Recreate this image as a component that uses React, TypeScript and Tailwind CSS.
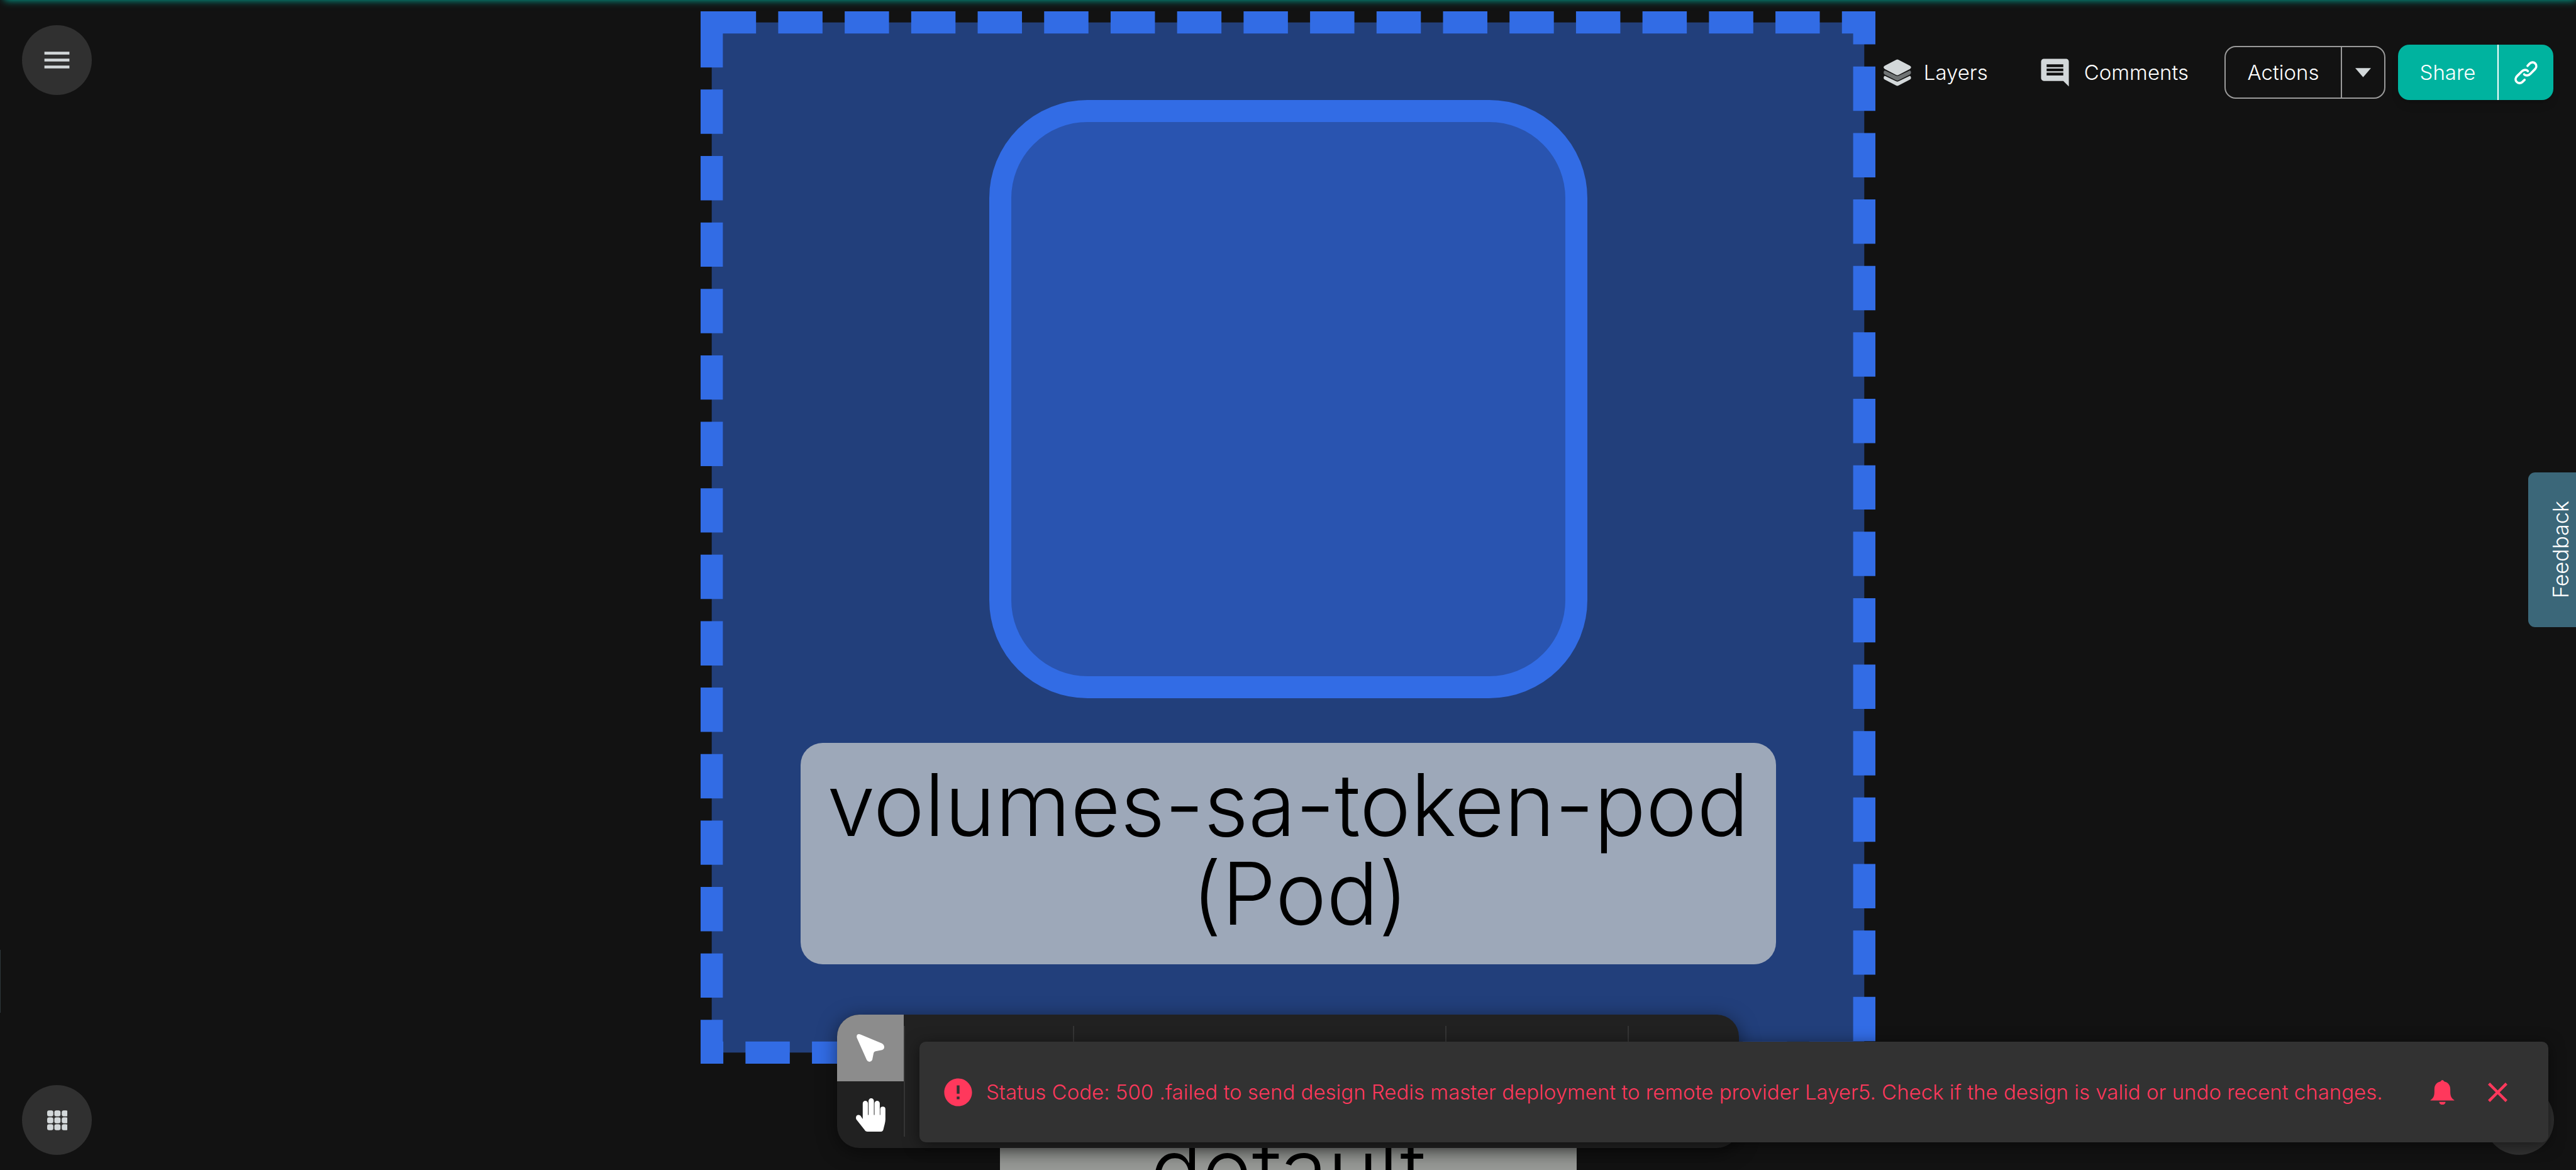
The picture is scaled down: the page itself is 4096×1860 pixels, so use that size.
import React from "react";

const FONT = "font-['Inter','Open_Sans',sans-serif] font-light";

function MenuIcon() {
  return (
    <svg viewBox="0 0 24 24" className="size-[53px] fill-[#d3d8da]" aria-hidden="true">
      <path d="M3 18h18v-2H3v2zm0-5h18v-2H3v2zm0-7v2h18V6H3z" />
    </svg>
  );
}

function AppsIcon() {
  const cells = [0, 47, 95];
  const rows = [0, 45, 90];
  return (
    <svg viewBox="-4 -5 135 135" className="size-[33px] fill-[#d3d8da]" aria-hidden="true">
      {rows.map((y) =>
        cells.map((x) => <rect key={`${x}-${y}`} x={x} y={y} width="40" height="39" rx="13" />)
      )}
    </svg>
  );
}

function LayersIcon() {
  return (
    <svg viewBox="39 50 177 174" className="h-[43px] w-[44px] fill-[#d3d8da]" aria-hidden="true">
      <path d="M120 54Q127 50 134 54L208 92Q223 103 208 114L134 152Q127 156 120 152L46 114Q31 103 46 92Z" />
      <path
        fill="#6f7374"
        d="M46 123L120 157Q127 161 134 157L208 123Q216 128 215 138Q215 145 208 149L134 187Q127 191 120 187L46 149Q39 145 39 138Q38 128 46 123Z"
      />
      <path d="M46 157L120 193Q127 197 134 193L208 157Q216 162 215 171Q215 178 208 182L134 220Q127 224 120 220L46 182Q39 178 39 171Q38 162 46 157Z" />
    </svg>
  );
}

function CommentIcon() {
  return (
    <svg viewBox="0 0 24 24" className="size-[53px] fill-[#d3d8da]" aria-hidden="true">
      <path d="M21.99 4c0-1.1-.89-2-1.99-2H4c-1.1 0-2 .9-2 2v12c0 1.1.9 2 2 2h14l4 4-.01-18zM18 14H6v-2h12v2zm0-3H6V9h12v2zm0-3H6V6h12v2z" />
    </svg>
  );
}

function CaretIcon() {
  return (
    <svg viewBox="0 0 24 14" className="h-[15px] w-[25px] fill-[#d3d8da]" aria-hidden="true">
      <path d="M0 0h24L12 14z" />
    </svg>
  );
}

function LinkIcon() {
  return (
    <svg
      viewBox="64 117 160 160"
      className="size-[39px] fill-none stroke-white"
      strokeWidth="15"
      strokeLinecap="round"
      aria-hidden="true"
    >
      <path d="M154 153L166 140C177 128 193 126 203 136C214 147 213 163 204 173L172 205C161 217 143 219 132 208" />
      <path d="M156 187C146 176 129 177 118 188L85 220C74 231 73 246 83 257C93 268 109 268 119 259L135 244" />
    </svg>
  );
}

function CursorIcon() {
  return (
    <svg viewBox="0 0 60 60" className="size-[44px] fill-white" aria-hidden="true">
      <path d="M.6 8Q-1 0 5 0Q7 0 10 1.500L55 20Q60 23 60 28Q60 33 55 34.500L41 37Q37.600 38 37 41L34 56Q32 60 28 60Q24 60 22 56Z" />
    </svg>
  );
}

function HandIcon() {
  return (
    <svg viewBox="0 0 64 72" className="h-[53px] w-[47px] fill-white" aria-hidden="true">
      <path d="M14.700 45V11a5.600 5.600 0 0 1 11.300 0V36h1.300V5.700a5.800 5.800 0 0 1 11.600 0V36h1.300V11a5.700 5.700 0 0 1 11.400 0V36h1V23.500a5.600 5.600 0 0 1 11.200 0V46C63.800 52 61 60 59.500 67Q58.500 72 54 72H25Q20.500 72 18.500 68L1 46C-1 42 0 37 4.500 36C8 35.500 10 37 11.500 40Z" />
    </svg>
  );
}

function ErrorIcon() {
  return (
    <svg viewBox="0 0 24 24" className="size-[53px] shrink-0 fill-[#ff385c]" aria-hidden="true">
      <path d="M12 2C6.480 2 2 6.480 2 12s4.480 10 10 10 10-4.480 10-10S17.520 2 12 2zm1 15h-2v-2h2v2zm0-4h-2V7h2v6z" />
    </svg>
  );
}

function BellIcon() {
  return (
    <svg viewBox="0 0 53 54" className="size-[39px] fill-[#ff385c]" aria-hidden="true">
      <path d="M22.500 3Q26.500 -3 30.500 3C39 5 44 11 44 20V25C44 35 46 39 50.500 42.500Q53 44 53 45H0Q0 44 2.500 42.500C7 39 9 35 9 25V20C9 11 14 5 22.500 3Z" />
      <path d="M19.500 48H33.500A7 6.500 0 0 1 19.500 48Z" />
    </svg>
  );
}

function CloseIcon() {
  return (
    <svg viewBox="0 0 24 24" className="size-[53px] fill-[#ff385c]" aria-hidden="true">
      <path d="M19 6.410L17.590 5 12 10.590 6.410 5 5 6.410 10.590 12 5 17.590 6.410 19 12 13.410 17.590 19 19 17.590 13.410 12z" />
    </svg>
  );
}

function PodGroup() {
  return (
    <section className="relative mt-[18px] flex shrink-0 flex-col items-center pt-[141px] pb-[158px]">
      <svg
        viewBox="0 0 2534 2271"
        preserveAspectRatio="none"
        className="absolute top-0 left-1/2 h-full w-[1868px] -translate-x-1/2"
        aria-hidden="true"
      >
        <rect
          x="24"
          y="24"
          width="2486"
          height="2223"
          fill="#223f7b"
          stroke="#326ce5"
          strokeWidth="48"
          strokeDasharray="95.600 47.800"
        />
        <rect width="48" height="48" fill="#326ce5" />
      </svg>
      <div className="relative size-[951px] rounded-[156px] border-[35px] border-[#326ce5] bg-[#2954b0]" />
      <p className="relative mt-[71px] w-[1551px] rounded-[35px] bg-[#9da8b9] pt-[28px] pb-[42px] text-center text-[137px] leading-[141px] whitespace-pre text-black">
        {"volumes-sa-token-pod\n (Pod)"}
      </p>
    </section>
  );
}

function Canvas() {
  return (
    <main className="absolute inset-0 flex flex-col items-center overflow-hidden">
      <PodGroup />
      <p className="mt-[70px] w-[917px] shrink-0 rounded-[35px] bg-[#989a97] pt-[28px] pb-[42px] text-center text-[137px] leading-[141px] text-black">
        default
      </p>
    </main>
  );
}

function Header() {
  return (
    <header className="absolute inset-x-0 top-0 flex items-start justify-between pt-[40px] pr-[36px] pl-[35px] text-[33px] leading-[44px] text-white">
      <button
        aria-label="Menu"
        className="flex size-[111px] items-center justify-center rounded-full bg-[#303030]"
      >
        <MenuIcon />
      </button>
      <nav className="mt-[31px] flex h-[88px] items-center">
        <button className="mr-[80px] flex items-center gap-[20px]">
          <LayersIcon />
          Layers
        </button>
        <button className="mr-[57px] flex items-center gap-[20px]">
          <CommentIcon />
          Comments
        </button>
        <div className="mr-[20px] flex h-[84px] w-[256px] rounded-[18px] border-2 border-[#9a9a9a]">
          <button className="flex-1 border-r-2 border-[#9a9a9a]">Actions</button>
          <button aria-label="More actions" className="flex w-[67px] items-center justify-center">
            <CaretIcon />
          </button>
        </div>
        <div className="flex h-[88px] w-[247px] overflow-hidden rounded-[18px] bg-[#00b39f] shadow-lg">
          <button className="flex-1 border-r-2 border-white">Share</button>
          <button aria-label="Copy link" className="flex w-[87px] items-center justify-center">
            <LinkIcon />
          </button>
        </div>
      </nav>
    </header>
  );
}

function Toolbar() {
  return (
    <div className="absolute bottom-[35px] left-1/2 flex h-[212px] w-[1434px] -translate-x-1/2 overflow-hidden rounded-[35px] bg-[#212121]">
      <div className="flex w-[106px] flex-col">
        <button aria-label="Select" className="flex flex-1 items-center justify-center bg-[#8c8c8c]">
          <CursorIcon />
        </button>
        <button aria-label="Pan" className="flex flex-1 items-center justify-center">
          <HandIcon />
        </button>
      </div>
      <div className="my-[18px] w-[271px] border-x-2 border-[#353535]" />
      <div className="my-[18px] w-[592px] border-r-2 border-[#353535]" />
      <div className="my-[18px] w-[290px] border-r-2 border-[#353535]" />
    </div>
  );
}

function Snackbar() {
  return (
    <div
      role="alert"
      className="absolute right-[44px] bottom-[44px] flex h-[160px] w-[2590px] items-center rounded-[10px] bg-[#323232] pr-[54px] pl-[35px] text-[33px] leading-[44px] text-[#ff385c] shadow-[0_4px_24px_rgba(0,0,0,0.5)]"
    >
      <ErrorIcon />
      <p className="ml-[18px] flex-1 whitespace-nowrap">
        Status Code: 500 .failed to send design Redis master deployment to remote provider Layer5. Check if the
        design is valid or undo recent changes.
      </p>
      <button aria-label="Notifications" className="mr-[42px]">
        <BellIcon />
      </button>
      <button aria-label="Close">
        <CloseIcon />
      </button>
    </div>
  );
}

export default function App() {
  return (
    <div className={`relative h-screen w-full overflow-hidden bg-[#121212] ${FONT}`}>
      <Canvas />
      <div className="absolute -top-[40px] right-0 left-[7px] h-[40px] shadow-[0_0_12px_#00b39f]" />
      <div className="absolute top-[1510px] left-0 h-[100px] w-px bg-[#2e373b]" />
      <Header />
      <button
        aria-label="Feedback"
        className="absolute top-[751px] right-0 flex h-[246px] w-[76px] items-center justify-end rounded-l-[11px] bg-[#3b6779] pr-[2px] text-[34px] leading-[44px] text-white"
      >
        <span className="flex h-full rotate-180 items-center justify-center [writing-mode:vertical-rl]">Feedback</span>
      </button>
      <div className="absolute inset-x-[35px] bottom-[24px] flex justify-between">
        <button aria-label="Apps" className="flex size-[111px] items-center justify-center rounded-full bg-[#303030]">
          <AppsIcon />
        </button>
        <button aria-label="Help" className="size-[111px] rounded-full bg-[#303030]" />
      </div>
      <div className="pointer-events-none absolute inset-0 [&>*]:pointer-events-auto">
        <div className="absolute bottom-[35px] left-1/2 h-[212px] w-[1434px] -translate-x-1/2 rounded-[35px] shadow-[0_6px_30px_rgba(0,0,0,0.5)]" />
        <Toolbar />
        <Snackbar />
      </div>
    </div>
  );
}
